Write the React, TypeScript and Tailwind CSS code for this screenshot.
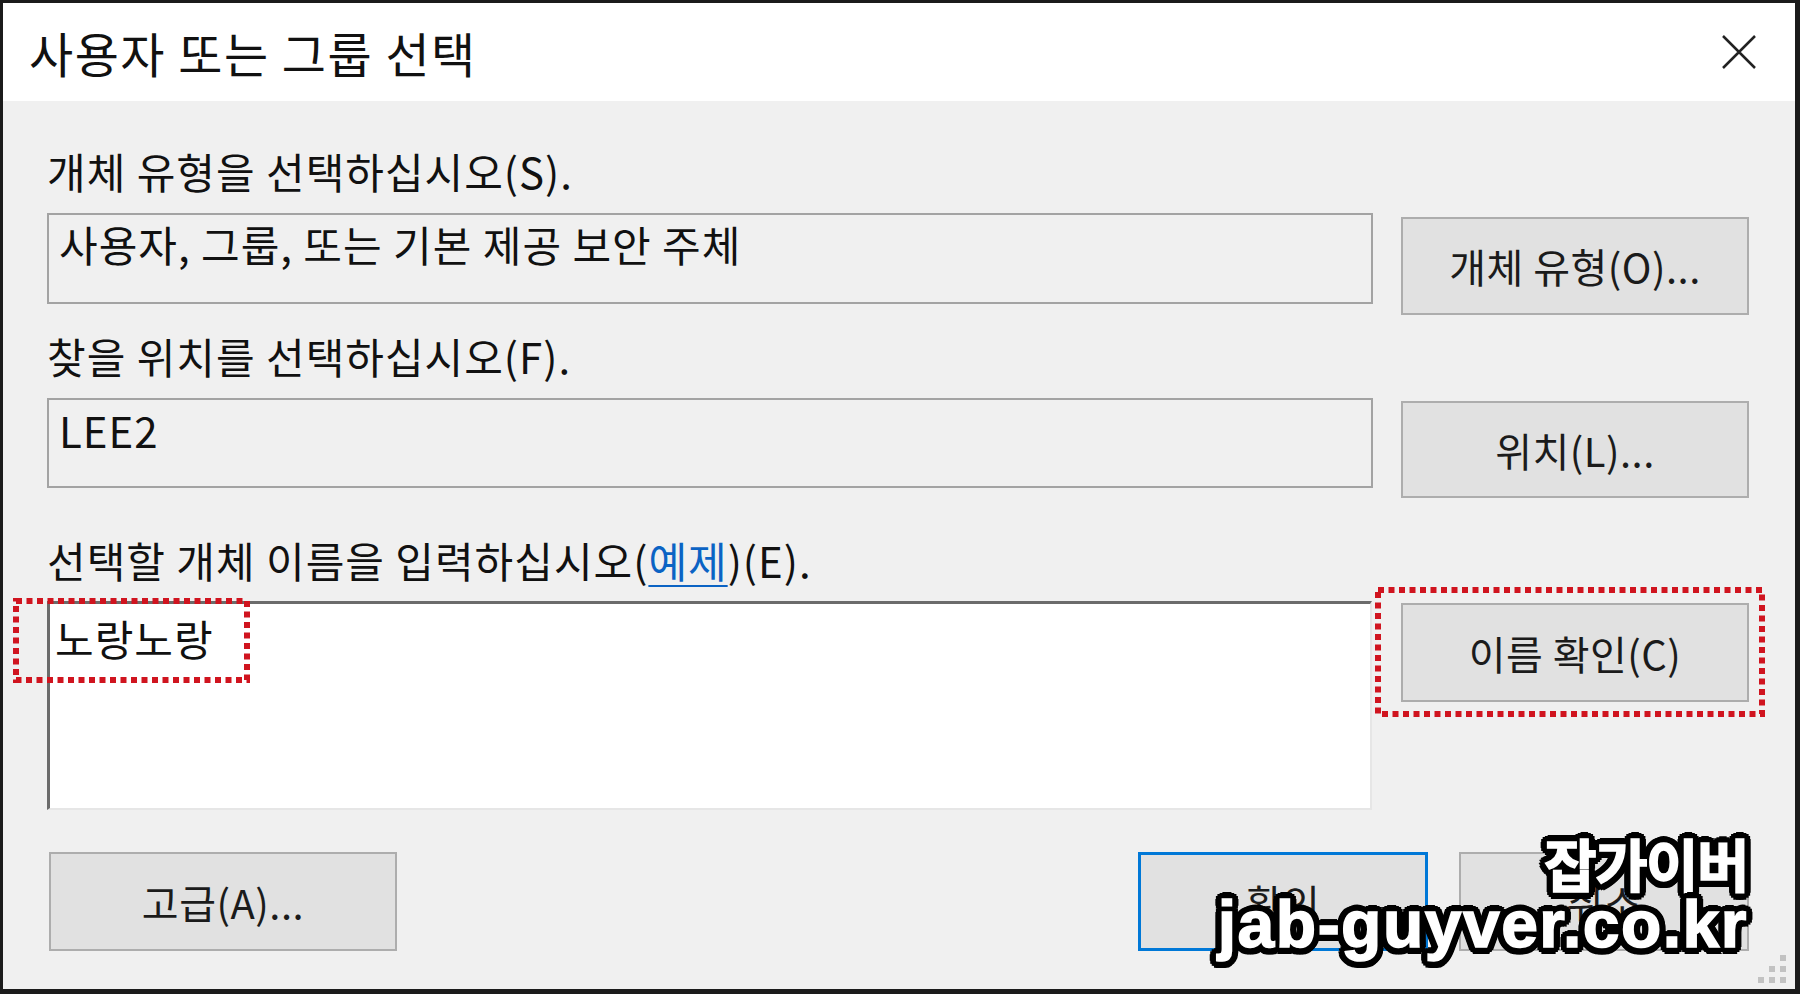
import React from 'react';

const font = "font-['Noto_Sans_CJK_KR','Noto_Sans',sans-serif]";

const outline =
  '[text-shadow:7px_0_0_#000,-7px_0_0_#000,0_7px_0_#000,0_-7px_0_#000,5px_5px_0_#000,-5px_5px_0_#000,5px_-5px_0_#000,-5px_-5px_0_#000,6.5px_2.7px_0_#000,-6.5px_2.7px_0_#000,6.5px_-2.7px_0_#000,-6.5px_-2.7px_0_#000,2.7px_6.5px_0_#000,-2.7px_6.5px_0_#000,2.7px_-6.5px_0_#000,-2.7px_-6.5px_0_#000,3.5px_0_0_#000,-3.5px_0_0_#000,0_3.5px_0_#000,0_-3.5px_0_#000]';

interface BtnProps {
  children: React.ReactNode;
  className?: string;
}

const Btn: React.FC<BtnProps> = ({ children, className = '' }) => (
  <div
    className={`shrink-0 flex items-center justify-center bg-[#e1e1e1] text-[40px] leading-[48px] tracking-[0.5px] text-[#1b1b1b] ${className}`}
  >
    {children}
  </div>
);

// red dotted highlight drawn over the dialog
const Marker: React.FC<{ x: number; y: number; w: number; h: number }> = ({ x, y, w, h }) => (
  <svg className="absolute" style={{ left: x, top: y }} width={w} height={h}>
    <rect
      x={3}
      y={3}
      width={w - 6}
      height={h - 6}
      fill="none"
      stroke="#d0141f"
      strokeWidth={6}
      strokeDasharray="6 4.5"
    />
  </svg>
);

export default function App() {
  return (
    <div className={`relative w-[1800px] h-[994px] bg-[#1b1b1b] pt-[3px] pl-[3px] pr-[5px] pb-[5px] ${font}`}>
      <div className="h-full flex flex-col bg-[#f0f0f0]">
        {/* title bar */}
        <div className="h-[98px] shrink-0 bg-white flex items-center justify-between pl-[26px] pr-[39px]">
          <span className="text-[48px] leading-[52px] tracking-[1.5px] text-[#111]">사용자 또는 그룹 선택</span>
          <svg width="34" height="34" viewBox="0 0 34 34">
            <path d="M1 1L33 33M33 1L1 33" stroke="#222" strokeWidth="2.5" fill="none" />
          </svg>
        </div>

        <div className="flex-1 flex flex-col pl-[44px] pr-[46px] pt-[46px] text-[#111] text-[42px] leading-[48px] tracking-[1px]">
          <div className="h-[48px]">개체 유형을 선택하십시오(S).</div>
          <div className="mt-[18px] flex items-start gap-[28px]">
            <div className="w-[1326px] h-[91px] border-2 border-[#a3a3a3] pl-[10px] pt-[5px]">
              사용자, 그룹, 또는 기본 제공 보안 주체
            </div>
            <Btn className="w-[348px] h-[98px] mt-[4px] border-2 border-[#adadad]">개체 유형(O)...</Btn>
          </div>

          <div className="mt-[17px] h-[48px]">찾을 위치를 선택하십시오(F).</div>
          <div className="mt-[18px] flex items-start gap-[28px]">
            <div className="w-[1326px] h-[90px] border-2 border-[#a3a3a3] pl-[10px] pt-[6px]">LEE2</div>
            <Btn className="w-[348px] h-[97px] mt-[3px] border-2 border-[#adadad]">위치(L)...</Btn>
          </div>

          <div className="mt-[38px] h-[48px]">
            선택할 개체 이름을 입력하십시오(
            <span className="text-[#0b63c4] underline decoration-[#0b63c4] decoration-2 underline-offset-[7px]">예제</span>
            )(E).
          </div>
          <div className="mt-[17px] flex items-start gap-[29px]">
            <div className="w-[1325px] h-[209px] bg-white border-t-[3px] border-l-[3px] border-r-2 border-b-2 border-t-[#6b6b6b] border-l-[#6b6b6b] border-r-[#e6e6e6] border-b-[#e6e6e6] pl-[5px] pt-[10px]">
              노랑노랑
            </div>
            <Btn className="w-[348px] h-[99px] mt-[2px] border-2 border-[#adadad]">이름 확인(C)</Btn>
          </div>

          <div className="mt-[42px] flex justify-between">
            <Btn className="w-[348px] h-[99px] ml-[2px] border-2 border-[#adadad]">고급(A)...</Btn>
            <div className="flex gap-[31px]">
              <Btn className="w-[290px] h-[99px] border-[3px] border-[#0078d7]">확인</Btn>
              <Btn className="w-[290px] h-[99px] border-2 border-[#adadad]">취소</Btn>
            </div>
          </div>
        </div>
      </div>

      {/* resize grip */}
      <svg className="absolute left-[1756px] top-[953px]" width="32" height="32">
        <g fill="#c2c2c2">
          <rect x="24" y="2" width="6" height="6" />
          <rect x="13" y="13" width="6" height="6" />
          <rect x="24" y="13" width="6" height="6" />
          <rect x="2" y="24" width="6" height="6" />
          <rect x="13" y="24" width="6" height="6" />
          <rect x="24" y="24" width="6" height="6" />
        </g>
      </svg>

      <Marker x={13} y={598} w={237} h={85} />
      <Marker x={1375} y={587} w={390} h={130} />

      {/* watermark */}
      <div className={`absolute right-[52px] top-[834px] flex flex-col items-end text-white ${outline}`}>
        <span className="text-[57px] leading-[56px] font-bold tracking-[-1.5px] [-webkit-text-stroke:1.5px_white]">잡가이버</span>
        <span className="mt-[2px] text-[66px] leading-[64px] font-bold tracking-[1.5px] [-webkit-text-stroke:1.5px_white] font-['Liberation_Sans',Arial,sans-serif]">
          jab-guyver.co.kr
        </span>
      </div>
    </div>
  );
}
